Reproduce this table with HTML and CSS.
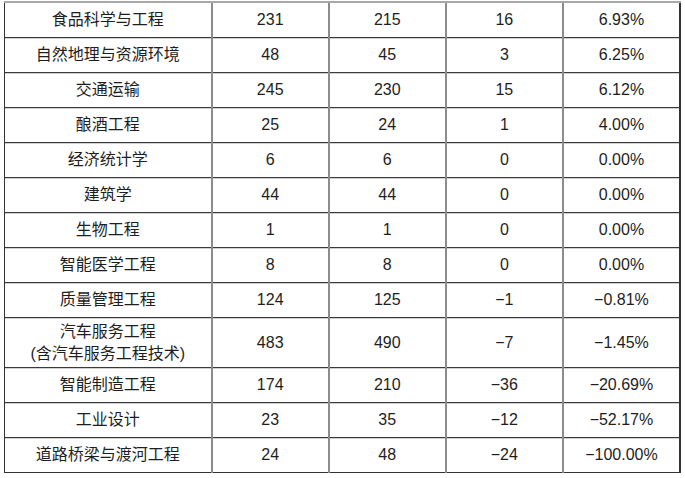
FILE: index.html
```html
<!DOCTYPE html>
<html lang="zh">
<head>
<meta charset="utf-8">
<link rel="stylesheet" href="styles.css">
</head>
<body>
<table class="grid">
  <colgroup>
    <col class="c-name"><col class="c-num"><col class="c-num"><col class="c-num"><col class="c-num">
  </colgroup>
  <tbody>
    <tr class="first"><td>食品科学与工程</td><td>231</td><td>215</td><td>16</td><td>6.93%</td></tr>
    <tr><td>自然地理与资源环境</td><td>48</td><td>45</td><td>3</td><td>6.25%</td></tr>
    <tr><td>交通运输</td><td>245</td><td>230</td><td>15</td><td>6.12%</td></tr>
    <tr><td>酿酒工程</td><td>25</td><td>24</td><td>1</td><td>4.00%</td></tr>
    <tr><td>经济统计学</td><td>6</td><td>6</td><td>0</td><td>0.00%</td></tr>
    <tr><td>建筑学</td><td>44</td><td>44</td><td>0</td><td>0.00%</td></tr>
    <tr><td>生物工程</td><td>1</td><td>1</td><td>0</td><td>0.00%</td></tr>
    <tr><td>智能医学工程</td><td>8</td><td>8</td><td>0</td><td>0.00%</td></tr>
    <tr><td>质量管理工程</td><td>124</td><td>125</td><td>−1</td><td>−0.81%</td></tr>
    <tr class="tall"><td>汽车服务工程<br>(含汽车服务工程技术)</td><td>483</td><td>490</td><td>−7</td><td>−1.45%</td></tr>
    <tr><td>智能制造工程</td><td>174</td><td>210</td><td>−36</td><td>−20.69%</td></tr>
    <tr><td>工业设计</td><td>23</td><td>35</td><td>−12</td><td>−52.17%</td></tr>
    <tr><td>道路桥梁与渡河工程</td><td>24</td><td>48</td><td>−24</td><td>−100.00%</td></tr>
  </tbody>
</table>
</body>
</html>
```
FILE: styles.css
```css
html, body {
  margin: 0;
  padding: 0;
  background: #ffffff;
}
body {
  padding: 1px 0 0 4px;
  font-family: "Liberation Sans", "Noto Sans CJK SC", sans-serif;
  font-size: 16px;
  color: #1e1e1e;
}
.grid {
  border-collapse: collapse;
  table-layout: fixed;
  width: 677px;
  border-left: 1px solid #333;
  border-right: 2px solid #333;
  border-bottom: 1px solid #333;
}
.c-name { width: 207px; }
.c-num { width: 117px; }
.grid td {
  height: 34px;
  padding: 0;
  text-align: center;
  vertical-align: middle;
  line-height: 22px;
  border-top: 1px solid #3a3a3a;
  border-left: 2px solid #8c8c8c;
  box-shadow: inset 0 1px 0 #d0d0d0;
}
.grid td:first-child {
  border-left: 1px solid #333;
}
.grid tr.first td {
  border-top: 2px solid #a8a8a8;
  box-shadow: none;
}
.grid tr.tall td {
  height: 49px;
}
```
